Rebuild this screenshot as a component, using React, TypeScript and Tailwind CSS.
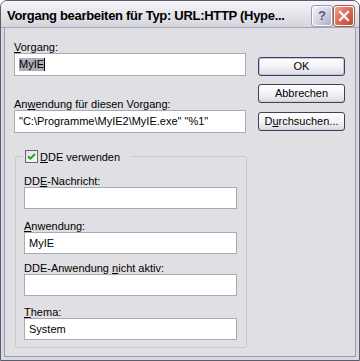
import type { ReactNode } from "react";

// Zugriffstaste unterstreichen
const U = ({ children }: { children: ReactNode }) => (
  <span className="underline underline-offset-[1px]">{children}</span>
);

function Label({ children, className = "" }: { children: ReactNode; className?: string }) {
  return <div className={`h-[12px] whitespace-nowrap text-[11px] leading-[12px] ${className}`}>{children}</div>;
}

function TextBox({ children, className = "" }: { children?: ReactNode; className?: string }) {
  return (
    <div className={`flex items-center whitespace-nowrap border border-[#a5acb2] bg-white pl-[4px] text-[11px] leading-[13px] ${className}`}>
      {children}
    </div>
  );
}

function XpButton({ children, isDefault = false, className = "" }: { children: ReactNode; isDefault?: boolean; className?: string }) {
  return (
    <button
      className={`h-[19px] w-[87px] rounded-[3px] border border-[#3f3f5e] bg-gradient-to-b from-white via-[#f4f4f7] to-[#dadae2] text-[11px] leading-none text-black ${
        isDefault ? "shadow-[inset_0_0_0_1px_#bcc6e8]" : "shadow-[inset_0_-1px_0_#cfcfd8]"
      } ${className}`}
    >
      {children}
    </button>
  );
}

export default function App() {
  return (
    <div className="h-[361px] w-[360px] bg-white font-['Liberation_Sans',Arial,sans-serif] text-black">
      <div className="flex h-full flex-col overflow-hidden rounded-t-[7px] border border-[#5b5b6f] bg-[#e0dfe3]">
        {/* Titelleiste */}
        <div className="flex h-[27px] shrink-0 items-center border-b border-[#a7a7b6] bg-gradient-to-b from-[#f7f7f9] via-[#e4e4ea] to-[#d5d5dd] pl-[6px] pr-[5px] pt-[3px]">
          <span className="text-[13px] font-bold leading-none tracking-[-0.3px]">Vorgang bearbeiten für Typ: URL:HTTP (Hype...</span>
          <div className="ml-auto flex gap-[2px]">
            <div className="flex h-[20px] w-[20px] items-center justify-center rounded-[3px] border border-white bg-gradient-to-br from-[#f2f2f8] via-[#d4d6e4] to-[#a9acc4] shadow-[0_0_0_1px_#9a9cb4] text-[13px] font-bold leading-none text-[#56587a]">
              ?
            </div>
            <div className="flex h-[20px] w-[20px] items-center justify-center rounded-[3px] border border-white bg-gradient-to-br from-[#f0a090] via-[#dc6a58] to-[#c04030] shadow-[0_0_0_1px_#a8564c]">
              <svg width="12" height="12" viewBox="0 0 12 12">
                <path d="M2 2 L10 10 M10 2 L2 10" stroke="white" strokeWidth="2.2" strokeLinecap="square" />
              </svg>
            </div>
          </div>
        </div>

        {/* Fensterinhalt */}
        <div className="flex flex-1 border-x-[3px] border-b-[3px] border-[#d9d8e0]">
          <div className="flex flex-1 border-x border-b border-[#9c9bad] pl-[9px] pt-[13px]">
            <div className="flex w-[232px] flex-col">
              <Label>
                <U>V</U>organg:
              </Label>
              <TextBox className="h-[23px]">
                <span className="bg-[#aeaeb9]">MyIE</span>
                <span className="h-[13px] w-px bg-black" />
              </TextBox>

              <Label className="mt-[22px]">
                An<U>w</U>endung für diesen Vorgang:
              </Label>
              <TextBox className="h-[23px]">"C:\Programme\MyIE2\MyIE.exe" "%1"</TextBox>

              <fieldset className="ml-[1px] mt-[17px] w-[232px] rounded-[3px] border border-[#c6c6ce] px-[8px] pb-[7px]">
                <legend className="ml-[-1px] flex h-[13px] items-center pl-[2px] pr-[11px]">
                  <span className="flex h-[13px] w-[13px] items-center justify-center border border-[#5e6680] bg-gradient-to-br from-[#dcdce4] to-white">
                    <svg width="9" height="9" viewBox="0 0 9 9">
                      <path d="M1 4.2 L3.4 6.6 L8 2" fill="none" stroke="#21a121" strokeWidth="2" />
                    </svg>
                  </span>
                  <span className="ml-[2px] text-[11px] leading-[12px]">
                    <U>D</U>DE verwenden
                  </span>
                </legend>

                <Label className="mt-[12px]">
                  DD<U>E</U>-Nachricht:
                </Label>
                <TextBox className="h-[22px] w-[213px]" />

                <Label className="mt-[11px]">
                  <U>A</U>nwendung:
                </Label>
                <TextBox className="h-[22px] w-[213px]">MyIE</TextBox>

                <Label className="mt-[8px]">
                  DDE-Anwendung <U>n</U>icht aktiv:
                </Label>
                <TextBox className="h-[22px] w-[213px]" />

                <Label className="mt-[10px]">
                  <U>T</U>hema:
                </Label>
                <TextBox className="h-[22px] w-[213px]">System</TextBox>
              </fieldset>
            </div>

            <div className="ml-[12px] flex flex-col pt-[16px]">
              <XpButton isDefault>OK</XpButton>
              <XpButton className="mt-[8px]">Abbrechen</XpButton>
              <XpButton className="mt-[9px]">
                D<U>u</U>rchsuchen...
              </XpButton>
            </div>
          </div>
        </div>
      </div>
    </div>
  );
}
